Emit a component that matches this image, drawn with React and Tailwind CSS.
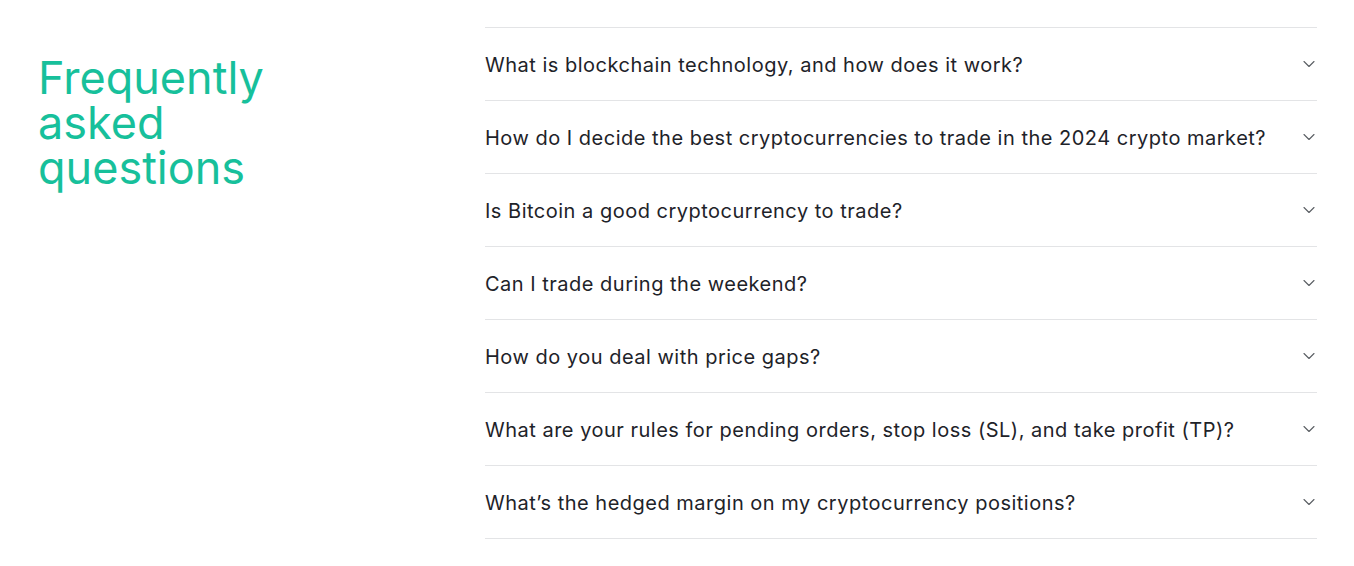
const QUESTIONS = [
  'What is blockchain technology, and how does it work?',
  'How do I decide the best cryptocurrencies to trade in the 2024 crypto market?',
  'Is Bitcoin a good cryptocurrency to trade?',
  'Can I trade during the weekend?',
  'How do you deal with price gaps?',
  'What are your rules for pending orders, stop loss (SL), and take profit (TP)?',
  'What\u2019s the hedged margin on my cryptocurrency positions?',
];

function Chevron() {
  return (
    <svg width="12" height="12" viewBox="0 0 12 12" fill="none" className="text-[#5a5e63] shrink-0">
      <path d="M1 3.5 6 8.5l5-5" stroke="currentColor" strokeWidth="1.1" strokeLinecap="round" strokeLinejoin="round" />
    </svg>
  );
}

export default function App() {
  return (
    <div className="w-full min-h-[566px] bg-white font-['Inter','Liberation_Sans',sans-serif] flex pl-[38px] pr-[37px] pt-[27px]">
      {/* Heading */}
      <div className="w-[447px] shrink-0 pt-[28px]">
        <h2 className="text-[45px] leading-[45px] font-normal text-[#17c09b]">
          Frequently
          <br />
          asked
          <br />
          questions
        </h2>
      </div>

      {/* FAQ list */}
      <div className="flex-1 border-t border-[#e3e4e6]">
        {QUESTIONS.map((q) => (
          <button
            key={q}
            className="w-full flex items-center justify-between pt-[23px] pb-[21px] border-b border-[#e3e4e6] text-left"
          >
            <span className="text-[20px] leading-[28px] tracking-[0.5px] text-[#1e2329]">{q}</span>
            <span className="pr-[2px] -mt-[2px]">
              <Chevron />
            </span>
          </button>
        ))}
      </div>
    </div>
  );
}
